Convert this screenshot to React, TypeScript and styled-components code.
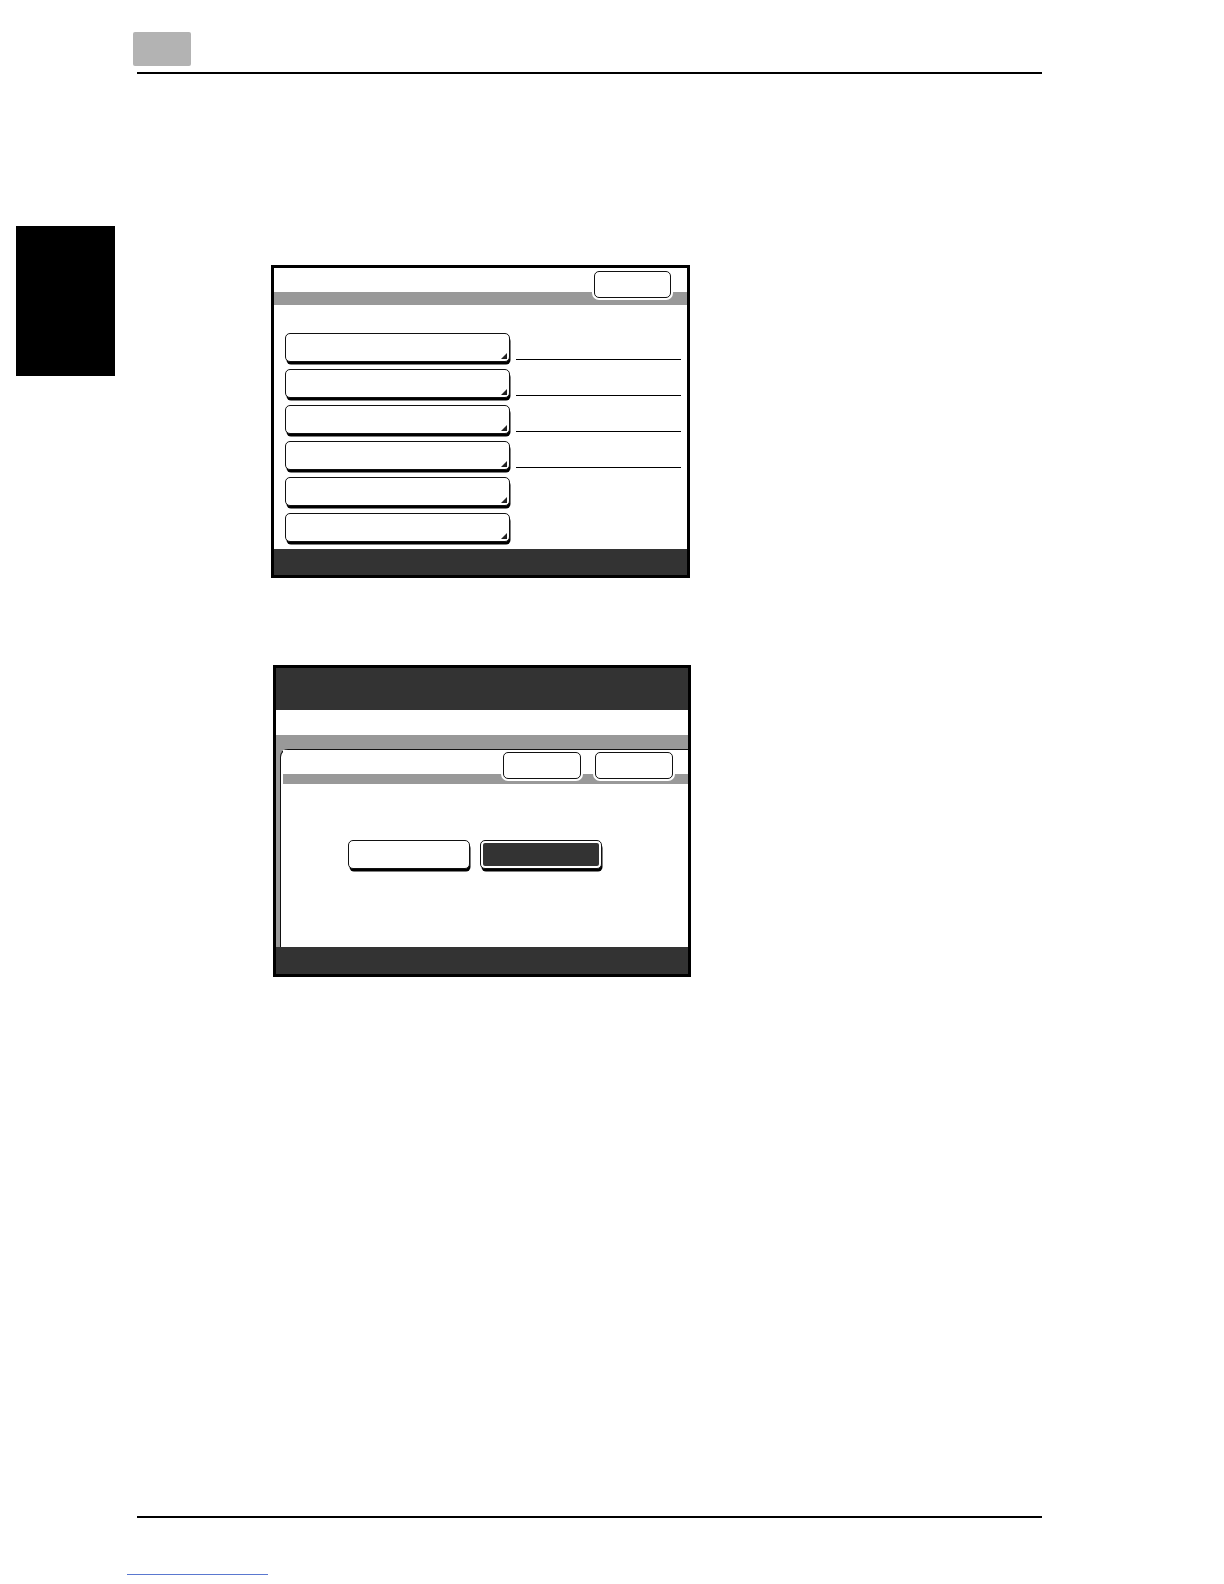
import React from 'react';
import styled, { createGlobalStyle } from 'styled-components';

const GlobalStyle = createGlobalStyle`
  html, body {
    margin: 0;
    padding: 0;
    background: #fff;
    font-family: "Liberation Sans", Arial, sans-serif;
  }
`

const Page = styled.div`
  width: 1224px;
  height: 1584px;
  display: flex;
  flex-direction: column;
  background: #fff;
  overflow: hidden;
`

const Header = styled.div`
  padding-top: 32px;
  display: flex;
  flex-direction: column;
`

const ChapterTab = styled.div`
  margin-left: 133px;
  width: 58px;
  height: 34px;
  background: #b3b3b3;
  border-radius: 2px;
`

const Rule = styled.div<{ $top: number }>`
  margin-top: ${p => p.$top}px;
  margin-left: 137px;
  width: 905px;
  height: 2px;
  background: #000;
`

const Body = styled.div`
  display: flex;
  align-items: flex-start;
`

const SideTab = styled.div`
  margin-top: 152px;
  margin-left: 16px;
  width: 99px;
  height: 150px;
  background: #000;
`

const Screens = styled.div`
  margin-left: 156px;
  margin-top: 191px;
  display: flex;
  flex-direction: column;
`

const Frame = styled.div<{ $shift?: number; $top?: number }>`
  box-sizing: border-box;
  width: ${p => (p.$shift ? 418 : 419)}px;
  height: ${p => (p.$shift ? 312 : 313)}px;
  margin-left: ${p => p.$shift || 0}px;
  margin-top: ${p => p.$top || 0}px;
  border: 3px solid #000;
  display: flex;
  flex-direction: column;
  background: #fff;
`

/* white strip with a grey band under it, buttons sit across both */
const TitleRow = styled.div<{ $white: number; $grey: number; $pad: number; $inset?: number }>`
  height: ${p => p.$white + p.$grey}px;
  margin-left: ${p => p.$inset || 0}px;
  display: flex;
  justify-content: flex-end;
  align-items: flex-start;
  gap: 14px;
  padding-right: ${p => p.$pad}px;
  background: linear-gradient(
    to bottom,
    #fff 0,
    #fff ${p => p.$white}px,
    #999 ${p => p.$white}px,
    #999 100%
  );
`

const TopButton = styled.div<{ $w: number; $h: number; $mt: number }>`
  box-sizing: border-box;
  width: ${p => p.$w}px;
  height: ${p => p.$h}px;
  margin-top: ${p => p.$mt}px;
  background: #fff;
  border: 1.5px solid #111;
  border-radius: 5px;
  box-shadow: 0 0 0 2px #fff;
`

const MenuGrid = styled.div`
  flex: 1;
  padding-top: 28px;
  padding-left: 11px;
  display: grid;
  grid-template-columns: 225px 165px;
  grid-auto-rows: 36px;
  column-gap: 6px;
  align-content: start;
`

const KeyButton = styled.div`
  position: relative;
  box-sizing: border-box;
  height: 29px;
  background: #fff;
  border: 1.5px solid #111;
  border-radius: 5px;
  box-shadow: 1px 3px 0 -0.5px #000;

  &::after {
    content: '';
    position: absolute;
    right: 2px;
    bottom: 2px;
    width: 0;
    height: 0;
    border-style: solid;
    border-width: 0 0 6px 6px;
    border-color: transparent transparent #222 transparent;
  }
`

const FieldLine = styled.div<{ $show: boolean }>`
  align-self: start;
  margin-top: 26px;
  height: 1px;
  background: ${p => (p.$show ? '#000' : 'transparent')};
`

const StatusBar = styled.div<{ $h: number }>`
  height: ${p => p.$h}px;
  background: #333;
  flex-shrink: 0;
`

const DarkHeader = styled.div`
  height: 42px;
  background: #333;
`

const WhiteBand = styled.div`
  height: 25px;
  background: #fff;
`

const GreyZone = styled.div`
  flex: 1;
  background: #999;
  padding: 14px 0 0 4px;
  display: flex;
`

const Panel = styled.div`
  flex: 1;
  background: #fff;
  border-top: 1.5px solid #111;
  border-left: 1.5px solid #111;
  border-top-left-radius: 8px;
  display: flex;
  flex-direction: column;
`

const ChoiceRow = styled.div`
  margin-top: 56px;
  padding-left: 67px;
  display: flex;
  gap: 10px;
`

const ChoiceButton = styled.div`
  box-sizing: border-box;
  width: 122px;
  height: 29px;
  padding: 2px;
  background: #fff;
  border: 1.5px solid #111;
  border-radius: 5px;
  box-shadow: 1px 3px 0 -0.5px #000;
  display: flex;
`

const ChoiceFill = styled.div`
  flex: 1;
  background: #333;
  border-radius: 2px;
`

const Footer = styled.div`
  margin-top: auto;
  padding-bottom: 9px;
  display: flex;
  flex-direction: column;
`

const LinkLine = styled.div`
  margin-top: 56px;
  margin-left: 127px;
  width: 141px;
  height: 1px;
  background: #5a78d0;
`

const menuRows = [true, true, true, true, false, false]

const MenuScreen = () => (
  <Frame>
    <TitleRow $white={24} $grey={14} $pad={16}>
      <TopButton $w={77} $h={27} $mt={3} />
    </TitleRow>
    <MenuGrid>
      {menuRows.map((hasLine, i) => (
        <React.Fragment key={i}>
          <KeyButton />
          <FieldLine $show={hasLine} />
        </React.Fragment>
      ))}
    </MenuGrid>
    <StatusBar $h={26} />
  </Frame>
)

const ConfirmScreen = () => (
  <Frame $shift={2} $top={87}>
    <DarkHeader />
    <WhiteBand />
    <GreyZone>
      <Panel>
        <TitleRow $white={24} $grey={10} $pad={15} $inset={2}>
          <TopButton $w={78} $h={27} $mt={2} />
          <TopButton $w={78} $h={27} $mt={2} />
        </TitleRow>
        <ChoiceRow>
          <ChoiceButton />
          <ChoiceButton>
            <ChoiceFill />
          </ChoiceButton>
        </ChoiceRow>
      </Panel>
    </GreyZone>
    <StatusBar $h={27} />
  </Frame>
)

const App = () => (
  <>
    <GlobalStyle />
    <Page>
      <Header>
        <ChapterTab />
        <Rule $top={6} />
      </Header>
      <Body>
        <SideTab />
        <Screens>
          <MenuScreen />
          <ConfirmScreen />
        </Screens>
      </Body>
      <Footer>
        <Rule $top={0} />
        <LinkLine />
      </Footer>
    </Page>
  </>
)

export default App
